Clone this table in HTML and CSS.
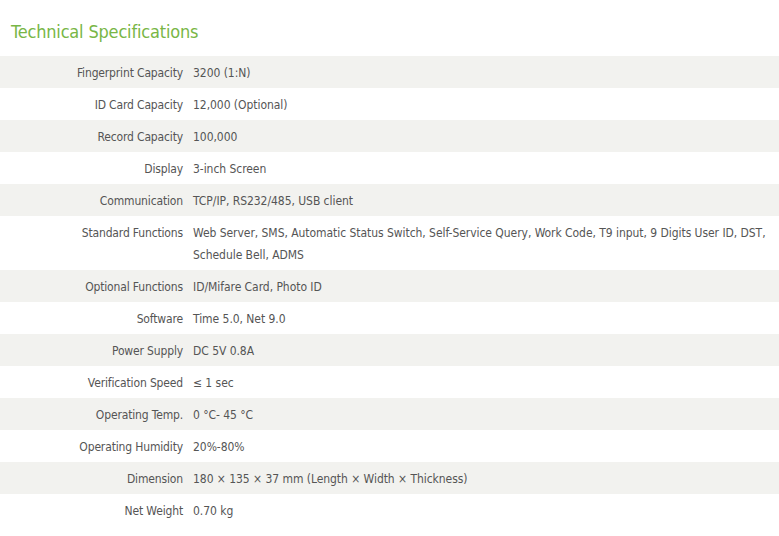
FILE: index.html
```html
<!DOCTYPE html>
<html>
<head>
<meta charset="utf-8">
<link rel="stylesheet" href="styles.css">
</head>
<body>
<h2 class="title">Technical Specifications</h2>
<table class="specs">
<tr><th>Fingerprint Capacity</th><td>3200 (1:N)</td></tr>
<tr><th>ID Card Capacity</th><td>12,000 (Optional)</td></tr>
<tr><th>Record Capacity</th><td>100,000</td></tr>
<tr><th>Display</th><td>3-inch Screen</td></tr>
<tr><th>Communication</th><td>TCP/IP, RS232/485, USB client</td></tr>
<tr><th>Standard Functions</th><td>Web Server, SMS, Automatic Status Switch, Self-Service Query, Work Code, T9 input, 9 Digits User ID, DST, Schedule Bell, ADMS</td></tr>
<tr><th>Optional Functions</th><td>ID/Mifare Card, Photo ID</td></tr>
<tr><th>Software</th><td>Time 5.0, Net 9.0</td></tr>
<tr><th>Power Supply</th><td>DC 5V 0.8A</td></tr>
<tr><th>Verification Speed</th><td>≤ 1 sec</td></tr>
<tr><th>Operating Temp.</th><td>0 °C- 45 °C</td></tr>
<tr><th>Operating Humidity</th><td>20%-80%</td></tr>
<tr><th>Dimension</th><td>180 × 135 × 37 mm (Length × Width × Thickness)</td></tr>
<tr><th>Net Weight</th><td>0.70 kg</td></tr>
</table>
</body>
</html>
```
FILE: styles.css
```css
html, body {
  margin: 0;
  padding: 0;
  background: #fff;
}
body {
  font-family: "DejaVu Sans Condensed", "DejaVu Sans", sans-serif;
  font-size: 12px;
  color: #555;
}
.title {
  margin: 0;
  padding: 20px 0 12px 11px;
  font-size: 18px;
  line-height: 24px;
  font-weight: normal;
  letter-spacing: -0.18px;
  color: #78b646;
}
.specs {
  width: 100%;
  border-collapse: collapse;
}
.specs tr:nth-child(odd) {
  background: #f2f2ef;
}
.specs th,
.specs td {
  padding: 6px 5px 4px;
  line-height: 22px;
  vertical-align: top;
  font-weight: normal;
}
.specs th {
  width: 178px;
  text-align: right;
  white-space: nowrap;
  letter-spacing: -0.15px;
}
.specs td {
  text-align: left;
  letter-spacing: -0.05px;
}
```
